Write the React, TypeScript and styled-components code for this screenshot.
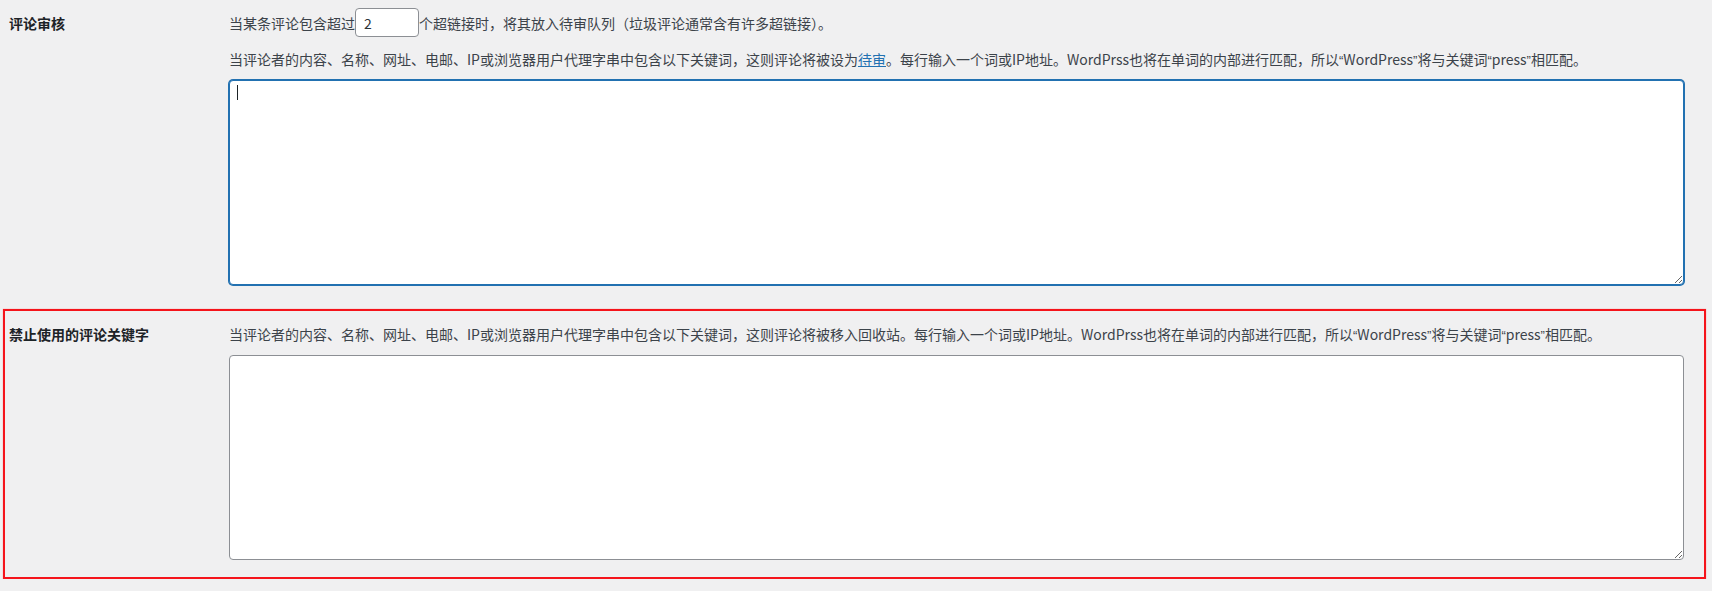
import React from "react";
import styled, { createGlobalStyle } from "styled-components";

const Global = createGlobalStyle`
  html, body {
    margin: 0;
    padding: 0;
    background: #f0f0f1;
  }
  body {
    font-family: "Noto Sans CJK SC", "Noto Sans", sans-serif;
    font-size: 14px;
    color: #3c434a;
  }
`;

const Table = styled.div`
  margin: 0 6px 0 3px;
  display: flex;
  flex-direction: column;
`;

const Row = styled.div<{ $highlight?: boolean; $top: number; $bottom: number }>`
  display: grid;
  grid-template-columns: 224px 1fr;
  border: 2px solid ${(p) => (p.$highlight ? "#f5141b" : "transparent")};
  box-shadow: ${(p) => (p.$highlight ? "0 0 1px 0 rgba(255,60,60,0.6)" : "none")};
  padding: ${(p) => p.$top}px 20px ${(p) => p.$bottom}px 0;
`;

const Label = styled.div<{ $offset: number }>`
  padding: ${(p) => p.$offset}px 0 0 4px;
  font-weight: 700;
  font-size: 14px;
  line-height: 20px;
  color: #1d2327;
`;

const Field = styled.div`
  display: flex;
  flex-direction: column;
  min-width: 0;
`;

const InlineLine = styled.div`
  display: flex;
  align-items: center;
  line-height: 20px;
  white-space: nowrap;
`;

const NumberInput = styled.input`
  box-sizing: border-box;
  width: 64px;
  height: 29px;
  margin: 0;
  padding: 0 8px;
  border: 1px solid #8c8f94;
  border-radius: 4px;
  background: #fff;
  color: #2c3338;
  font-family: "Noto Sans CJK SC", "Noto Sans", sans-serif;
  font-size: 14px;
  outline: none;
`;

const Text = styled.p<{ $gap: number }>`
  margin: ${(p) => p.$gap}px 0 0 0;
  height: 20px;
  line-height: 20px;
  white-space: nowrap;
`;

const Q = styled.span`
  font-family: "Liberation Sans", sans-serif;
  font-size: 13px;
  line-height: 1;
`;

const Link = styled.a`
  color: #2271b1;
  text-decoration: underline;
`;

const AreaWrap = styled.div<{ $gap: number }>`
  position: relative;
  margin-top: ${(p) => p.$gap}px;
`;

const Area = styled.textarea<{ $focused?: boolean }>`
  box-sizing: border-box;
  display: block;
  width: 100%;
  height: 205px;
  margin: 0;
  padding: 2px 6px;
  border: 1px solid ${(p) => (p.$focused ? "#2271b1" : "#8c8f94")};
  border-radius: 4px;
  box-shadow: ${(p) => (p.$focused ? "0 0 0 1px #2271b1" : "none")};
  background: #fff;
  color: #2c3338;
  font-family: "Noto Sans CJK SC", "Noto Sans", sans-serif;
  font-size: 14px;
  line-height: 20px;
  outline: none;
  resize: both;
  caret-color: transparent;
`;

const Caret = styled.span`
  position: absolute;
  left: 8px;
  top: 5px;
  width: 1px;
  height: 15px;
  background: #1d2327;
  pointer-events: none;
`;

function Quoted({ children }: { children: React.ReactNode }) {
  return (
    <>
      <Q>“</Q>
      {children}
      <Q>”</Q>
    </>
  );
}

export default function App() {
  return (
    <>
      <Global />
      <Table>
        <Row $top={6} $bottom={22}>
          <Label $offset={5}>评论审核</Label>
          <Field>
            <InlineLine>
              当某条评论包含超过
              <NumberInput type="text" defaultValue="2" />
              个超链接时，将其放入待审队列（垃圾评论通常含有许多超链接）。
            </InlineLine>
            <Text $gap={12}>
              当评论者的内容、名称、网址、电邮、IP或浏览器用户代理字串中包含以下关键词，这则评论将被设为
              <Link href="#">待审</Link>
              。每行输入一个词或IP地址。WordPrss也将在单词的内部进行匹配，所以
              <Quoted>WordPress</Quoted>将与关键词<Quoted>press</Quoted>相匹配。
            </Text>
            <AreaWrap $gap={11}>
              <Area $focused />
              <Caret />
            </AreaWrap>
          </Field>
        </Row>
        <Row $highlight $top={13} $bottom={17}>
          <Label $offset={0}>禁止使用的评论关键字</Label>
          <Field>
            <Text $gap={0}>
              当评论者的内容、名称、网址、电邮、IP或浏览器用户代理字串中包含以下关键词，这则评论将被移入回收站。每行输入一个词或IP地址。WordPrss也将在单词的内部进行匹配，所以
              <Quoted>WordPress</Quoted>将与关键词<Quoted>press</Quoted>相匹配。
            </Text>
            <AreaWrap $gap={11}>
              <Area />
            </AreaWrap>
          </Field>
        </Row>
      </Table>
    </>
  );
}
